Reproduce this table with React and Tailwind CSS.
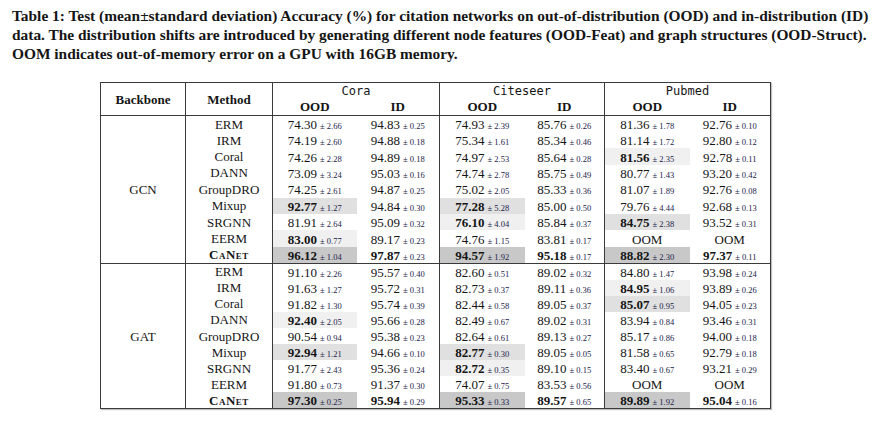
import React from 'react';

// [mean, std, mark] — mark: 0 plain, 'b' bold, 1 light fill, 2 mid fill, 3 dark fill (fills are bold)
const GCN = [
  ['ERM', [['74.30', '2.66'], ['94.83', '0.25'], ['74.93', '2.39'], ['85.76', '0.26'], ['81.36', '1.78'], ['92.76', '0.10']]],
  ['IRM', [['74.19', '2.60'], ['94.88', '0.18'], ['75.34', '1.61'], ['85.34', '0.46'], ['81.14', '1.72'], ['92.80', '0.12']]],
  ['Coral', [['74.26', '2.28'], ['94.89', '0.18'], ['74.97', '2.53'], ['85.64', '0.28'], ['81.56', '2.35', 1], ['92.78', '0.11']]],
  ['DANN', [['73.09', '3.24'], ['95.03', '0.16'], ['74.74', '2.78'], ['85.75', '0.49'], ['80.77', '1.43'], ['93.20', '0.42']]],
  ['GroupDRO', [['74.25', '2.61'], ['94.87', '0.25'], ['75.02', '2.05'], ['85.33', '0.36'], ['81.07', '1.89'], ['92.76', '0.08']]],
  ['Mixup', [['92.77', '1.27', 2], ['94.84', '0.30'], ['77.28', '5.28', 2], ['85.00', '0.50'], ['79.76', '4.44'], ['92.68', '0.13']]],
  ['SRGNN', [['81.91', '2.64'], ['95.09', '0.32'], ['76.10', '4.04', 1], ['85.84', '0.37'], ['84.75', '2.38', 2], ['93.52', '0.31']]],
  ['EERM', [['83.00', '0.77', 1], ['89.17', '0.23'], ['74.76', '1.15'], ['83.81', '0.17'], ['OOM'], ['OOM']]],
  ['CaNet', [['96.12', '1.04', 3], ['97.87', '0.23', 'b'], ['94.57', '1.92', 3], ['95.18', '0.17', 'b'], ['88.82', '2.30', 3], ['97.37', '0.11', 'b']]],
];

const GAT = [
  ['ERM', [['91.10', '2.26'], ['95.57', '0.40'], ['82.60', '0.51'], ['89.02', '0.32'], ['84.80', '1.47'], ['93.98', '0.24']]],
  ['IRM', [['91.63', '1.27'], ['95.72', '0.31'], ['82.73', '0.37'], ['89.11', '0.36'], ['84.95', '1.06', 1], ['93.89', '0.26']]],
  ['Coral', [['91.82', '1.30'], ['95.74', '0.39'], ['82.44', '0.58'], ['89.05', '0.37'], ['85.07', '0.95', 2], ['94.05', '0.23']]],
  ['DANN', [['92.40', '2.05', 1], ['95.66', '0.28'], ['82.49', '0.67'], ['89.02', '0.31'], ['83.94', '0.84'], ['93.46', '0.31']]],
  ['GroupDRO', [['90.54', '0.94'], ['95.38', '0.23'], ['82.64', '0.61'], ['89.13', '0.27'], ['85.17', '0.86'], ['94.00', '0.18']]],
  ['Mixup', [['92.94', '1.21', 2], ['94.66', '0.10'], ['82.77', '0.30', 2], ['89.05', '0.05'], ['81.58', '0.65'], ['92.79', '0.18']]],
  ['SRGNN', [['91.77', '2.43'], ['95.36', '0.24'], ['82.72', '0.35', 1], ['89.10', '0.15'], ['83.40', '0.67'], ['93.21', '0.29']]],
  ['EERM', [['91.80', '0.73'], ['91.37', '0.30'], ['74.07', '0.75'], ['83.53', '0.56'], ['OOM'], ['OOM']]],
  ['CaNet', [['97.30', '0.25', 3], ['95.94', '0.29', 'b'], ['95.33', '0.33', 3], ['89.57', '0.65', 'b'], ['89.89', '1.92', 3], ['95.04', '0.16', 'b']]],
];

const FILL = { 1: 'bg-[#f0f0f0]', 2: 'bg-[#e0e0e0]', 3: 'bg-[#c8c8c8]' };
const COL_W = ['w-[85px]', 'w-[87px]', 'w-[84px]', 'w-[83px]', 'w-[85px]', 'w-[80px]', 'w-[85px]', 'w-[81px]'];
const GROUP_EDGE = [false, true, false, true, false, true];

function Cell({ cell, edge }) {
  const [mean, std, mark] = cell;
  const bold = mark !== undefined && mark !== 0;
  return (
    <td className={`p-0 leading-none text-center whitespace-nowrap ${FILL[mark] || ''} ${edge ? 'border-r border-[#3a3a3a]' : ''}`}>
      <span className={`text-[13px] ${bold ? 'font-bold' : ''}`}>{mean}</span>
      {std && <span className="ml-[3px] text-[8.5px] text-[#22224a]">± {std}</span>}
    </td>
  );
}

function Method({ name }) {
  if (name === 'CaNet') {
    return <span className="font-bold tracking-[0.5px] [font-variant:small-caps]">CaNet</span>;
  }
  return name;
}

function Group({ label, rows, rowH }) {
  return rows.map(([name, cells], i) => (
    <tr key={name} className={`${rowH} ${i === 0 ? 'border-t border-[#3a3a3a]' : ''}`}>
      {i === 0 && (
        <td rowSpan={rows.length} className="p-0 leading-none text-center align-middle text-[13px] border-r border-[#3a3a3a]">
          {label}
        </td>
      )}
      <td className="p-0 leading-none text-center text-[13px] border-r border-[#3a3a3a]">
        <Method name={name} />
      </td>
      {cells.map((c, j) => (
        <Cell key={j} cell={c} edge={GROUP_EDGE[j]} />
      ))}
    </tr>
  ));
}

export default function App() {
  return (
    <div className="w-[873px] h-[423px] overflow-hidden bg-white text-[#151515] font-['Liberation_Serif',serif]">
      <p className="pl-[12px] pt-[6px] text-[15.4px] leading-[19px] font-bold whitespace-nowrap">
        Table 1: Test (mean±standard deviation) Accuracy (%) for citation networks on out-of-distribution (OOD) and in-distribution (ID)
        <br />
        data. The distribution shifts are introduced by generating different node features (OOD-Feat) and graph structures (OOD-Struct).
        <br />
        OOM indicates out-of-memory error on a GPU with 16GB memory.
      </p>

      <table className="ml-[100px] mt-[19px] border-collapse border border-[#3a3a3a] table-fixed shadow-[1px_1px_1px_rgba(0,0,0,0.25)]">
        <colgroup>
          {COL_W.map((w, i) => (
            <col key={i} className={w} />
          ))}
        </colgroup>
        <thead>
          <tr className="h-[16px]">
            <th rowSpan={2} className="p-0 leading-none text-[13px] font-bold border-r border-[#3a3a3a]">Backbone</th>
            <th rowSpan={2} className="p-0 leading-none text-[13px] font-bold border-r border-[#3a3a3a]">Method</th>
            {['Cora', 'Citeseer', 'Pubmed'].map((d, i) => (
              <th
                key={d}
                colSpan={2}
                className={`p-0 pt-[1px] leading-none font-normal text-[12px] font-['DejaVu_Sans_Mono',monospace] ${i < 2 ? 'border-r border-[#3a3a3a]' : ''}`}
              >
                {d}
              </th>
            ))}
          </tr>
          <tr className="h-[17px]">
            {[0, 1, 2, 3, 4, 5].map((i) => (
              <th key={i} className={`p-0 leading-none text-[13px] font-bold ${GROUP_EDGE[i] && i < 5 ? 'border-r border-[#3a3a3a]' : ''}`}>
                {i % 2 === 0 ? 'OOD' : 'ID'}
              </th>
            ))}
          </tr>
        </thead>
        <tbody>
          <Group label="GCN" rows={GCN} rowH="h-[16.4px]" />
          <Group label="GAT" rows={GAT} rowH="h-[16.1px]" />
        </tbody>
      </table>
    </div>
  );
}
